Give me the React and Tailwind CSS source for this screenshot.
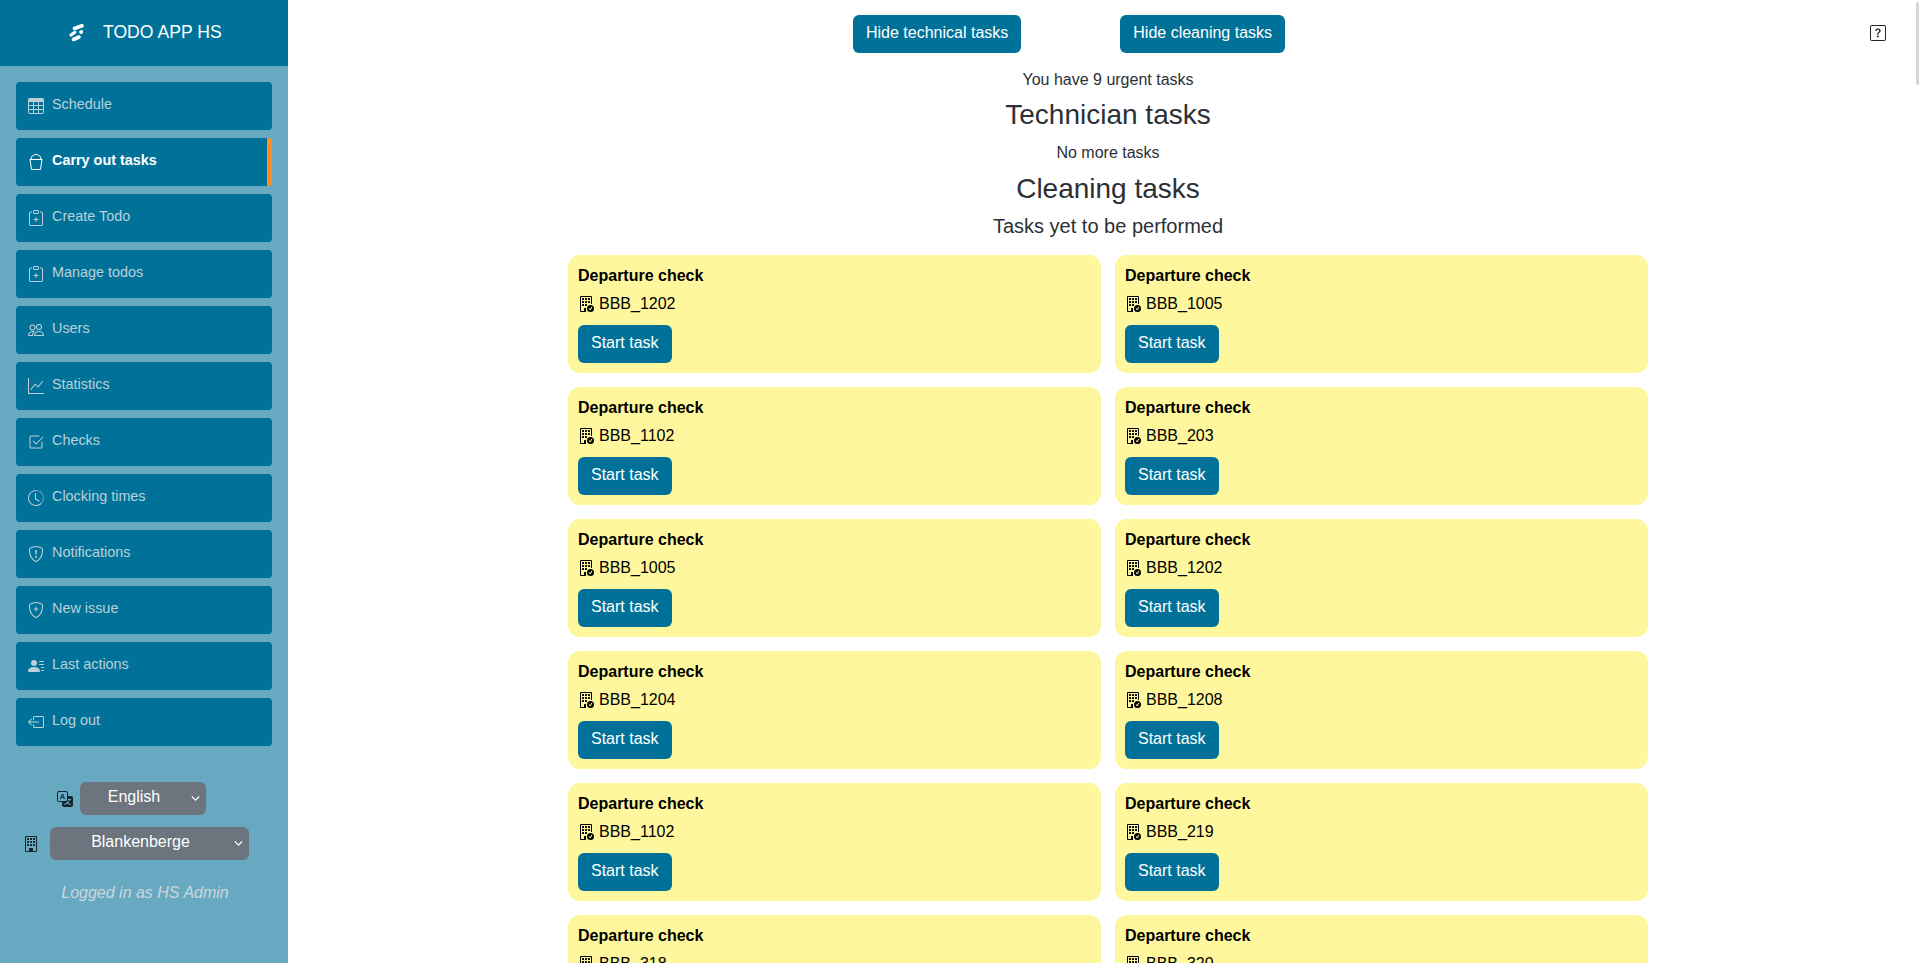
import React from "react";
import {
  BsTable,
  BsBucket,
  BsClipboardPlus,
  BsPeople,
  BsGraphUp,
  BsCheck2Square,
  BsClockHistory,
  BsShieldExclamation,
  BsShieldPlus,
  BsPersonLinesFill,
  BsBoxArrowLeft,
  BsTranslate,
  BsBuilding,
  BsBuildingCheck,
  BsQuestionSquare,
  BsChevronDown,
} from "react-icons/bs";

const navItems = [
  { label: "Schedule", icon: <BsTable /> },
  { label: "Carry out tasks", icon: <BsBucket />, active: true },
  { label: "Create Todo", icon: <BsClipboardPlus /> },
  { label: "Manage todos", icon: <BsClipboardPlus /> },
  { label: "Users", icon: <BsPeople /> },
  { label: "Statistics", icon: <BsGraphUp /> },
  { label: "Checks", icon: <BsCheck2Square /> },
  { label: "Clocking times", icon: <BsClockHistory /> },
  { label: "Notifications", icon: <BsShieldExclamation /> },
  { label: "New issue", icon: <BsShieldPlus /> },
  { label: "Last actions", icon: <BsPersonLinesFill /> },
  { label: "Log out", icon: <BsBoxArrowLeft /> },
];

const rooms = [
  ["BBB_1202", "BBB_1005"],
  ["BBB_1102", "BBB_203"],
  ["BBB_1005", "BBB_1202"],
  ["BBB_1204", "BBB_1208"],
  ["BBB_1102", "BBB_219"],
  ["BBB_318", "BBB_320"],
];

const Logo = () => (
  <svg width="18" height="18" viewBox="0 0 18 18" fill="none" stroke="white" strokeLinecap="round">
    <path d="M6.500 4.500 14 1.800" strokeWidth="3.600" />
    <path d="M3 11 6.800 8.300" strokeWidth="3.200" />
    <path d="M13 8.200 13.400 8" strokeWidth="3.600" />
    <path d="M5.500 15.500 11 13" strokeWidth="3.600" />
  </svg>
);

const NavItem = ({ label, icon, active }) => (
  <div
    className={`flex h-12 items-center rounded-[4px] bg-[#00729a] pl-3 text-[14.4px] ${
      active ? "border-r-[5px] border-[#fd8d25] font-bold text-white" : "text-[#bcd0d8]"
    }`}
  >
    <span className="w-[16px] text-[16px]">{icon}</span>
    <span className="-mt-[3px] ml-2">{label}</span>
  </div>
);

const FakeSelect = ({ label, width }) => (
  <div className={`relative flex h-[33px] ${width} items-center rounded-[6px] bg-[#6c757d] pr-[18px] text-white`}>
    <span className="-mt-[3px] w-full text-center">{label}</span>
    <BsChevronDown className="absolute right-[6px] top-[12px] text-[9px]" strokeWidth="1.5" />
  </div>
);

const Sidebar = () => (
  <aside className="flex h-screen w-[288px] shrink-0 flex-col bg-[#68a9c2]">
    <div className="flex h-[66px] items-center bg-[#00729a] pl-[68px] text-white">
      <Logo />
      <span className="-mt-[2px] ml-[17px] text-[17.6px]">TODO APP HS</span>
    </div>
    <nav className="mt-4 flex flex-col gap-2 pl-4 pr-4">
      {navItems.map((item) => (
        <NavItem key={item.label} {...item} />
      ))}
    </nav>
    <div className="mt-9 flex items-center pl-[57px]">
      <BsTranslate className="mr-[7px] text-[16px] text-[#16262e]" />
      <FakeSelect label="English" width="w-[126px]" />
    </div>
    <div className="mt-3 flex items-center pl-[23px]">
      <BsBuilding className="mr-[11px] text-[16px] text-[#16262e]" />
      <FakeSelect label="Blankenberge" width="w-[199px]" />
    </div>
    <p className="mt-[21px] pl-[2px] text-center text-[#cfd6da] italic">Logged in as HS Admin</p>
  </aside>
);

const TaskCard = ({ room }) => (
  <div className="h-[118px] rounded-[12px] bg-[#fff79d] px-[10px] pt-[9px] text-black">
    <div className="font-bold">Departure check</div>
    <div className="mt-[4px] flex items-center">
      <BsBuildingCheck className="mr-[5px] text-[16px]" />
      <span>{room}</span>
    </div>
    <button className="mt-[9px] h-[38px] rounded-[6px] bg-[#00729a] px-[13px] pb-[2px] text-white">Start task</button>
  </div>
);

const App = () => (
  <div className="relative flex h-screen overflow-hidden bg-white font-['Liberation_Sans',Arial,sans-serif] text-[16px]">
    <Sidebar />
    <main className="flex-1 pl-[280px]">
      <div className="w-[1080px]">
        <div className="flex gap-[99px] pl-[285px] pt-[15px]">
          <button className="h-[38px] rounded-[6px] bg-[#00729a] px-[13px] pb-[2px] text-white">Hide technical tasks</button>
          <button className="h-[38px] rounded-[6px] bg-[#00729a] px-[13px] pb-[2px] text-white">Hide cleaning tasks</button>
        </div>
        <div className="text-center text-[#2b3035]">
          <p className="mt-[18px] leading-[18px]">You have 9 urgent tasks</p>
          <h3 className="mt-[9px] text-[28px] leading-[34px]">Technician tasks</h3>
          <p className="mt-[12px] leading-[18px]">No more tasks</p>
          <h3 className="mt-[10px] text-[28px] leading-[34px]">Cleaning tasks</h3>
          <h5 className="mt-[8px] text-[20px] leading-[24px]">Tasks yet to be performed</h5>
        </div>
        <div className="mt-[17px] grid grid-cols-2 gap-x-[14px] gap-y-[14px]">
          {rooms.flat().map((room, i) => (
            <TaskCard key={i} room={room} />
          ))}
        </div>
      </div>
    </main>
    <BsQuestionSquare className="absolute right-[34px] top-[25px] text-[16px] text-[#212529]" />
    <div className="absolute right-[1px] top-[2px] h-[83px] w-[3px] rounded-full bg-[#d6d6d6]" />
  </div>
);

export default App;
